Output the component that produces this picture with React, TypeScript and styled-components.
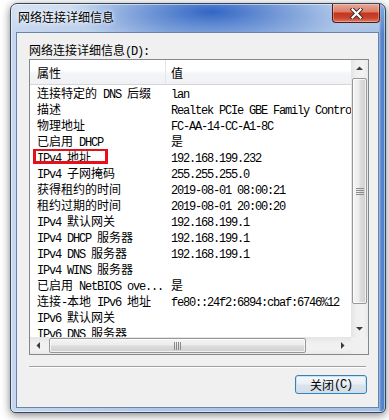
import React from 'react';
import styled, { createGlobalStyle } from 'styled-components';

const GlobalStyle = createGlobalStyle`
  html, body { margin: 0; padding: 0; background: #ffffff; }
  body {
    font-family: "Noto Sans CJK SC", "Noto Sans", sans-serif;
    font-size: 12px;
    color: #000;
  }
`;

const Page = styled.div`
  width: 389px;
  height: 420px;
  box-sizing: border-box;
  padding: 3px 0 0 10px;
  overflow: hidden;
`;

const Window = styled.div`
  width: 376px;
  height: 410px;
  box-sizing: border-box;
  border: 1px solid #34455e;
  border-radius: 7px 7px 5px 5px;
  background:
    radial-gradient(ellipse 140px 36px at 200px 8px, rgba(50, 102, 196, 1), rgba(50, 102, 196, 0) 100%),
    linear-gradient(180deg, rgba(255, 255, 255, 0.3), rgba(255, 255, 255, 0) 30px),
    linear-gradient(90deg, #c6d7ee 0%, #adc6e8 40%, #a6c1e6 calc(100% - 6px), #5a87cc calc(100% - 4px), #4d7cc8 100%);
  box-shadow: 0 2px 8px rgba(0, 0, 0, 0.5), inset 0 0 0 1px rgba(255, 255, 255, 0.5);
  display: flex;
  flex-direction: column;
`;

const TitleBar = styled.div`
  height: 28px;
  flex: none;
  display: flex;
  justify-content: space-between;
  align-items: flex-start;
  padding: 0 5px 0 7px;
`;

const Title = styled.div`
  padding-top: 5px;
  line-height: 16px;
  font-size: 12px;
  color: #000;
  text-shadow: 0 0 6px rgba(255, 255, 255, 0.95), 0 0 3px rgba(255, 255, 255, 0.9);
`;

const CloseButton = styled.div`
  width: 48px;
  height: 19px;
  box-sizing: border-box;
  border: 1px solid #4e1c14;
  border-top: none;
  border-radius: 0 0 4px 4px;
  background: linear-gradient(180deg, #e9a999 0%, #dc7e6a 42%, #c5351f 52%, #c94530 78%, #de7c64 100%);
  box-shadow: inset 0 0 0 1px rgba(255, 255, 255, 0.3);
  display: flex;
  align-items: center;
  justify-content: center;
`;

const Client = styled.div`
  flex: 1;
  margin: 0 6px 4px 5px;
  border: 1px solid #6a84a8;
  background: #f0f0f0;
  padding: 9px 9px 0 12px;
  display: flex;
  flex-direction: column;
`;

const Label = styled.div`
  height: 17px;
  line-height: 16px;
  white-space: nowrap;
`;

const ListBox = styled.div`
  width: 340px;
  height: 296px;
  box-sizing: border-box;
  border: 1px solid #828790;
  background: #fff;
  display: grid;
  grid-template-columns: 1fr 17px;
  grid-template-rows: 1fr 17px;
  overflow: hidden;
`;

const Viewport = styled.div`
  overflow: hidden;
  min-width: 0;
  min-height: 0;
`;

const Header = styled.div`
  display: grid;
  grid-template-columns: 136px 1fr;
  height: 25px;
  box-sizing: border-box;
  border-bottom: 1px solid #d5d5d5;
  background: linear-gradient(180deg, #ffffff 0%, #ffffff 45%, #f4f5f7 55%, #eff1f4 100%);
`;

const HeaderCell = styled.div<{ $first?: boolean }>`
  display: flex;
  align-items: center;
  padding-left: ${(p) => (p.$first ? 7 : 5)}px;
  border-right: ${(p) => (p.$first ? '1px solid #e2e6ec' : 'none')};
  font-size: 12px;
`;

const Row = styled.div`
  display: grid;
  grid-template-columns: 136px auto;
  height: 16px;
  line-height: 16px;
  white-space: nowrap;
`;

const Cell = styled.div<{ $first?: boolean }>`
  position: relative;
  padding-left: ${(p) => (p.$first ? 7 : 5)}px;
  overflow: ${(p) => (p.$first ? 'hidden' : 'visible')};
`;

const Marker = styled.div`
  position: absolute;
  left: 3px;
  top: -1px;
  width: 75px;
  height: 16px;
  box-sizing: border-box;
  border: 3px solid #e5101a;
  pointer-events: none;
`;

const Han = styled.span`
  font-family: "Noto Sans CJK SC", sans-serif;
`;

const Lat = styled.span`
  font-family: "Liberation Mono", monospace;
  letter-spacing: -1.2px;
`;

const VScroll = styled.div`
  display: flex;
  flex-direction: column;
  background: linear-gradient(90deg, #e4e4e4 0%, #efefef 30%, #f2f2f2 70%, #e9e9e9 100%);
`;

const HScroll = styled.div`
  display: flex;
  background: linear-gradient(180deg, #e4e4e4 0%, #efefef 30%, #f2f2f2 70%, #e9e9e9 100%);
`;

const ArrowBtn = styled.div`
  width: 17px;
  height: 17px;
  flex: none;
  display: flex;
  align-items: center;
  justify-content: center;
`;

const VTrack = styled.div`
  flex: 1;
  display: flex;
  flex-direction: column;
  align-items: center;
`;

const HTrack = styled.div`
  flex: 1;
  display: flex;
  align-items: center;
`;

const VThumb = styled.div`
  margin-top: 1px;
  width: 15px;
  height: 226px;
  box-sizing: border-box;
  border: 1px solid #979797;
  border-radius: 2px;
  background: linear-gradient(90deg, #f4f4f4 0%, #ececec 45%, #dcdcdc 55%, #d0d0d0 100%);
  box-shadow: inset 0 0 0 1px rgba(255, 255, 255, 0.7);
  display: flex;
  align-items: center;
  justify-content: center;
`;

const HThumb = styled.div`
  margin-left: 2px;
  width: 257px;
  height: 15px;
  box-sizing: border-box;
  border: 1px solid #979797;
  border-radius: 2px;
  background: linear-gradient(180deg, #f4f4f4 0%, #ececec 45%, #dcdcdc 55%, #d0d0d0 100%);
  box-shadow: inset 0 0 0 1px rgba(255, 255, 255, 0.7);
  display: flex;
  align-items: center;
  justify-content: center;
`;

const Corner = styled.div`
  background: #f0f0f0;
`;

const Separator = styled.div`
  margin-top: 11px;
  width: 337px;
  border-top: 1px solid #a0a0a0;
  border-bottom: 1px solid #ffffff;
`;

const ButtonRow = styled.div`
  width: 340px;
  margin-top: 7px;
  display: flex;
  justify-content: flex-end;
  padding-right: 2px;
  box-sizing: border-box;
`;

const Button = styled.div`
  width: 72px;
  height: 19px;
  box-sizing: border-box;
  border: 1px solid #3c7fb1;
  border-radius: 3px;
  background: linear-gradient(180deg, #f5f8fb 0%, #e9eff5 48%, #dbe4ec 52%, #d3dde7 100%);
  box-shadow: inset 0 0 0 1px #c6e2f5;
  display: flex;
  align-items: center;
  justify-content: center;
  line-height: 16px;
  white-space: nowrap;
`;

const CJK = /([\u2E80-\u9FFF\uFF00-\uFFEF\u3000-\u303F]+)/;

function Mixed({ text }: { text: string }) {
  const parts = text.split(CJK).filter((p) => p.length > 0);
  return (
    <>
      {parts.map((p, i) =>
        CJK.test(p) ? <Han key={i}>{p}</Han> : <Lat key={i}>{p}</Lat>
      )}
    </>
  );
}

type Dir = 'up' | 'down' | 'left' | 'right';
const rot: Record<Dir, number> = { up: 0, right: 90, down: 180, left: 270 };

function Arrow({ dir }: { dir: Dir }) {
  return (
    <svg width="7" height="7" viewBox="0 0 7 7" style={{ transform: `rotate(${rot[dir]}deg)` }}>
      <polygon points="0,5 3.5,1.5 7,5" fill="#3c3c3c" />
    </svg>
  );
}

function Grip({ vertical }: { vertical?: boolean }) {
  const lines = [0, 2, 4, 6];
  return vertical ? (
    <svg width="8" height="7" viewBox="0 0 8 7">
      {lines.map((y) => (
        <rect key={y} x="0" y={y} width="8" height="1" fill="#8a8a8a" />
      ))}
    </svg>
  ) : (
    <svg width="7" height="8" viewBox="0 0 7 8">
      {lines.map((x) => (
        <rect key={x} x={x} y="0" width="1" height="8" fill="#8a8a8a" />
      ))}
    </svg>
  );
}

const rows: [string, string][] = [
  ['连接特定的 DNS 后缀', 'lan'],
  ['描述', 'Realtek PCIe GBE Family Controller'],
  ['物理地址', 'FC-AA-14-CC-A1-8C'],
  ['已启用 DHCP', '是'],
  ['IPv4 地址', '192.168.199.232'],
  ['IPv4 子网掩码', '255.255.255.0'],
  ['获得租约的时间', '2019-08-01 08:00:21'],
  ['租约过期的时间', '2019-08-01 20:00:20'],
  ['IPv4 默认网关', '192.168.199.1'],
  ['IPv4 DHCP 服务器', '192.168.199.1'],
  ['IPv4 DNS 服务器', '192.168.199.1'],
  ['IPv4 WINS 服务器', ''],
  ['已启用 NetBIOS ove...', '是'],
  ['连接-本地 IPv6 地址', 'fe80::24f2:6894:cbaf:6746%12'],
  ['IPv6 默认网关', ''],
  ['IPv6 DNS 服务器', ''],
];

export default function App() {
  return (
    <>
      <GlobalStyle />
      <Page>
        <Window>
          <TitleBar>
            <Title>网络连接详细信息</Title>
            <CloseButton>
              <svg width="13" height="11" viewBox="0 0 13 11">
                <path d="M2.5 1.5 L10.5 9.5 M10.5 1.5 L2.5 9.5" stroke="#3a2a28" strokeWidth="4" strokeLinecap="square" />
                <path d="M2.5 1.5 L10.5 9.5 M10.5 1.5 L2.5 9.5" stroke="#ffffff" strokeWidth="2.2" strokeLinecap="square" />
              </svg>
            </CloseButton>
          </TitleBar>
          <Client>
            <Label>
              <Mixed text="网络连接详细信息(D):" />
            </Label>
            <ListBox>
              <Viewport>
                <Header>
                  <HeaderCell $first>属性</HeaderCell>
                  <HeaderCell>值</HeaderCell>
                </Header>
                {rows.map(([k, v], i) => (
                  <Row key={i}>
                    <Cell $first>
                      <Mixed text={k} />
                      {k === 'IPv4 地址' && <Marker />}
                    </Cell>
                    <Cell>
                      <Mixed text={v} />
                    </Cell>
                  </Row>
                ))}
              </Viewport>
              <VScroll>
                <ArrowBtn>
                  <Arrow dir="up" />
                </ArrowBtn>
                <VTrack>
                  <VThumb>
                    <Grip vertical />
                  </VThumb>
                </VTrack>
                <ArrowBtn>
                  <Arrow dir="down" />
                </ArrowBtn>
              </VScroll>
              <HScroll>
                <ArrowBtn>
                  <Arrow dir="left" />
                </ArrowBtn>
                <HTrack>
                  <HThumb>
                    <Grip />
                  </HThumb>
                </HTrack>
                <ArrowBtn>
                  <Arrow dir="right" />
                </ArrowBtn>
              </HScroll>
              <Corner />
            </ListBox>
            <Separator />
            <ButtonRow>
              <Button>
                <Mixed text="关闭(C)" />
              </Button>
            </ButtonRow>
          </Client>
        </Window>
      </Page>
    </>
  );
}
